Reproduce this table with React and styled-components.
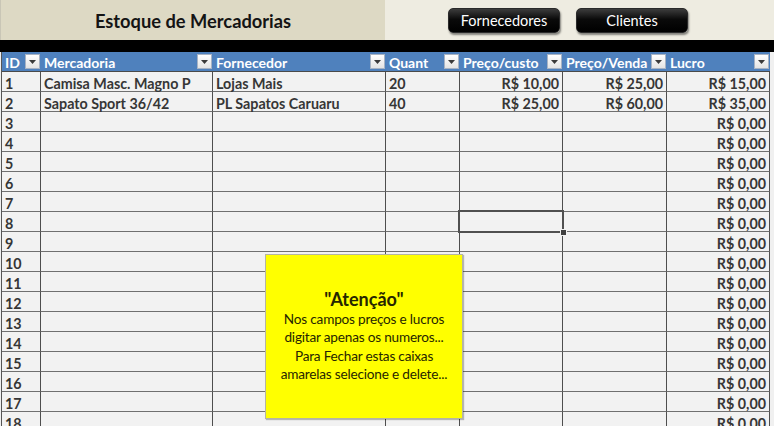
import React from "react";
import styled, { createGlobalStyle } from "styled-components";

const GlobalStyle = createGlobalStyle`
  html, body { margin: 0; padding: 0; }
  body {
    background: #f0f0f0;
    font-family: Lato, "Open Sans", "Liberation Sans", sans-serif;
    overflow: hidden;
    width: 774px;
    height: 426px;
  }
`;

const Page = styled.div`
  width: 774px;
  height: 426px;
  overflow: hidden;
  background: #f0f0f0;
`;

const TopBand = styled.div`
  display: flex;
  height: 40px;
`;

const TitlePanel = styled.div`
  width: 385px;
  background: #ddd9c4;
  border-left: 1px solid #c9c6b6;
  box-sizing: border-box;
  display: flex;
  align-items: center;
  justify-content: center;
  padding-top: 1px;
`;

const Title = styled.h1`
  margin: 0;
  font-size: 18.3px;
  font-weight: 700;
  color: #141414;
`;

const ButtonPanel = styled.div`
  flex: 1;
  background: #eeece1;
  display: flex;
  align-items: flex-start;
  padding: 8px 0 0 63px;
  gap: 16px;
`;

const NavButton = styled.button`
  width: 112px;
  height: 25px;
  border-radius: 5px;
  border: 1px solid #2a2a2a;
  background: linear-gradient(#3c3c3c 0%, #0a0a0a 45%, #000 100%);
  box-shadow: 1px 2px 2px rgba(0, 0, 0, 0.45);
  color: #fff;
  font-family: Lato, "Open Sans", sans-serif;
  font-size: 14.5px;
  padding: 0;
  cursor: pointer;
`;

const BlackBand = styled.div`
  height: 12px;
  background: #000;
`;

const TableWrap = styled.div`
  position: relative;
  margin-left: 1px;
  width: 769px;
  border-left: 1px solid #555;
`;

const Grid = styled.div`
  display: grid;
  grid-template-columns: 39px 172px 173px 74px 103px 104px 103px;
`;

const HeadCell = styled.div`
  height: 19px;
  background: #4f81bd;
  border-bottom: 1px solid #4a4a4a;
  display: flex;
  align-items: center;
  justify-content: space-between;
  padding: 0 1px 0 3px;
  color: #fff;
  font-weight: 700;
  font-size: 14px;
  overflow: hidden;
  white-space: nowrap;
  & > span:first-child {
    padding-top: 2px;
  }
`;

const Drop = styled.span`
  flex: none;
  width: 15px;
  height: 15px;
  box-sizing: border-box;
  background: linear-gradient(#ffffff, #e4e4e4);
  border: 1px solid #a7b3c4;
  display: flex;
  align-items: center;
  justify-content: center;
`;

const Cell = styled.div`
  position: relative;
  height: 19px;
  box-sizing: border-box;
  height: 20px;
  border-right: 1px solid #4e4e4e;
  border-bottom: 1px solid #707070;
  background: #f2f2f2;
  color: #363636;
  font-weight: 700;
  font-size: 14.3px;
  line-height: 17px;
  padding-top: 3px;
  padding-left: ${(p) => (p.$align === "right" ? "0" : "3px")};
  padding-right: ${(p) => (p.$align === "right" ? "3px" : "0")};
  text-align: ${(p) => p.$align || "left"};
  white-space: nowrap;
  overflow: visible;

  ${(p) =>
    p.$selected &&
    `
    &::after {
      content: "";
      position: absolute;
      left: -2px;
      top: -2px;
      right: -2px;
      bottom: -2px;
      border: 2px solid #505050;
      z-index: 2;
    }
    &::before {
      content: "";
      position: absolute;
      right: -5px;
      bottom: -5px;
      width: 5px;
      height: 5px;
      background: #404040;
      border: 1px solid #f2f2f2;
      z-index: 3;
    }
  `}
`;

const Note = styled.div`
  position: absolute;
  left: 263px;
  top: 202px;
  width: 198px;
  height: 165px;
  box-sizing: border-box;
  background: #ffff00;
  border: 1px solid #b5b5a0;
  box-shadow: 1px 1px 1px rgba(0, 0, 0, 0.25);
  display: flex;
  flex-direction: column;
  align-items: center;
  justify-content: center;
  text-align: center;
  color: #262600;
  z-index: 5;
  padding-bottom: 2px;
`;

const NoteTitle = styled.div`
  font-weight: 700;
  font-size: 18px;
  line-height: 22px;
`;

const NoteLine = styled.div`
  font-size: 13.6px;
  line-height: 18.5px;
  letter-spacing: -0.2px;
`;

const columns = [
  { key: "id", label: "ID" },
  { key: "merc", label: "Mercadoria" },
  { key: "forn", label: "Fornecedor" },
  { key: "quant", label: "Quant" },
  { key: "custo", label: "Preço/custo", align: "right" },
  { key: "venda", label: "Preço/Venda", align: "right" },
  { key: "lucro", label: "Lucro", align: "right" },
];

const rows = [
  { id: "1", merc: "Camisa Masc. Magno P", forn: "Lojas Mais", quant: "20", custo: "R$ 10,00", venda: "R$ 25,00", lucro: "R$ 15,00" },
  { id: "2", merc: "Sapato Sport 36/42", forn: "PL Sapatos Caruaru", quant: "40", custo: "R$ 25,00", venda: "R$ 60,00", lucro: "R$ 35,00" },
  ...Array.from({ length: 16 }, (_, i) => ({ id: String(i + 3), lucro: "R$ 0,00" })),
];

function DropArrow() {
  return (
    <Drop>
      <svg width="7" height="4" viewBox="0 0 7 4">
        <path d="M0 0 H7 L3.5 4 Z" fill="#3a3a3a" />
      </svg>
    </Drop>
  );
}

export default function App() {
  return (
    <Page>
      <GlobalStyle />
      <TopBand>
        <TitlePanel>
          <Title>Estoque de Mercadorias</Title>
        </TitlePanel>
        <ButtonPanel>
          <NavButton>Fornecedores</NavButton>
          <NavButton>Clientes</NavButton>
        </ButtonPanel>
      </TopBand>
      <BlackBand />
      <TableWrap>
        <Grid>
          {columns.map((c) => (
            <HeadCell key={c.key}>
              <span>{c.label}</span>
              <DropArrow />
            </HeadCell>
          ))}
          {rows.map((r, ri) =>
            columns.map((c) => (
              <Cell
                key={`${ri}-${c.key}`}
                $align={c.align}
                $selected={ri === 7 && c.key === "custo"}
              >
                {r[c.key] || ""}
              </Cell>
            ))
          )}
        </Grid>
        <Note>
          <NoteTitle>"Atenção"</NoteTitle>
          <NoteLine>Nos campos preços e lucros</NoteLine>
          <NoteLine>digitar apenas os numeros...</NoteLine>
          <NoteLine>Para Fechar estas caixas</NoteLine>
          <NoteLine>amarelas selecione e delete...</NoteLine>
        </Note>
      </TableWrap>
    </Page>
  );
}
